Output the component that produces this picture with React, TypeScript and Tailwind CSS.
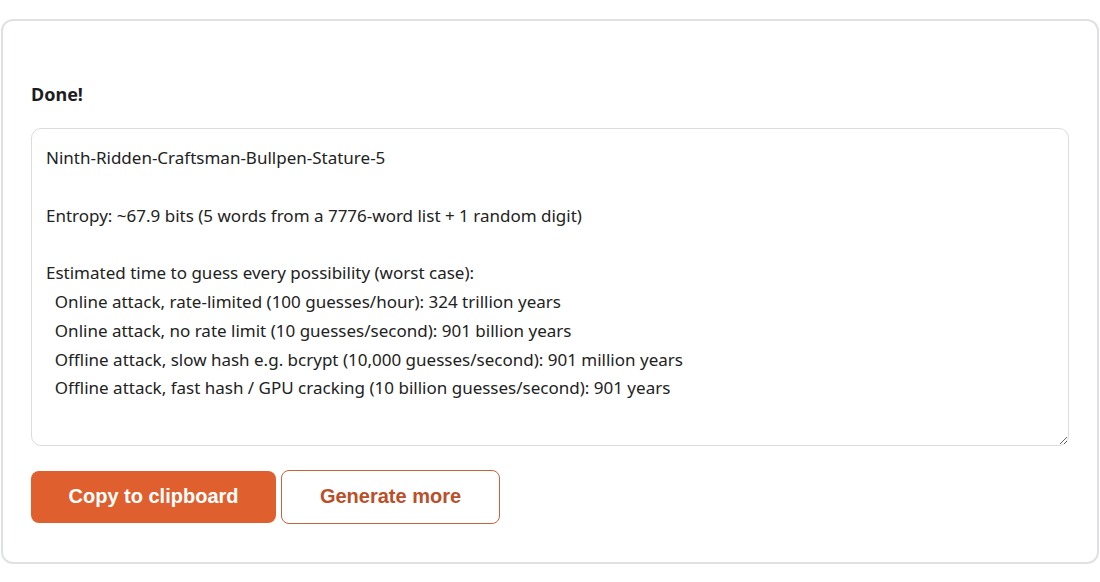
import React from "react";

const text = `Ninth-Ridden-Craftsman-Bullpen-Stature-5

Entropy: ~67.9 bits (5 words from a 7776-word list + 1 random digit)

Estimated time to guess every possibility (worst case):
  Online attack, rate-limited (100 guesses/hour): 324 trillion years
  Online attack, no rate limit (10 guesses/second): 901 billion years
  Offline attack, slow hash e.g. bcrypt (10,000 guesses/second): 901 million years
  Offline attack, fast hash / GPU cracking (10 billion guesses/second): 901 years`;

export default function App() {
  return (
    <div className="w-[1100px] h-[582px] bg-white pt-[19px] pl-px">
      <div className="w-[1098px] border-2 border-[#dfe1e4] rounded-[12px] px-[28px] pt-[61px] pb-[38px] bg-white">
        <div className="text-[18px] leading-[24px] font-bold text-[#1d1d1f] font-['Noto_Sans',sans-serif]">Done!</div>
        <textarea
          readOnly
          value={text}
          className="mt-[22px] block w-[1038px] h-[318px] border border-[#dcdcdc] rounded-[10px] px-[14px] py-[15px] text-[17px] leading-[28.8px] text-[#222] font-['Noto_Sans',sans-serif] whitespace-pre-wrap outline-none"
        />
        <div className="mt-[25px] flex gap-[5px]">
          <button className="w-[245px] h-[52px] rounded-[8px] bg-[#e05f2e] text-white text-[20px] font-bold font-['Liberation_Sans',Arial,sans-serif] pb-[2px]">
            Copy to clipboard
          </button>
          <button className="w-[219px] h-[54px] -mt-px rounded-[8px] border border-[#c4643c] bg-white text-[#b9502a] text-[20px] font-bold font-['Liberation_Sans',Arial,sans-serif] pb-[2px]">
            Generate more
          </button>
        </div>
      </div>
    </div>
  );
}
